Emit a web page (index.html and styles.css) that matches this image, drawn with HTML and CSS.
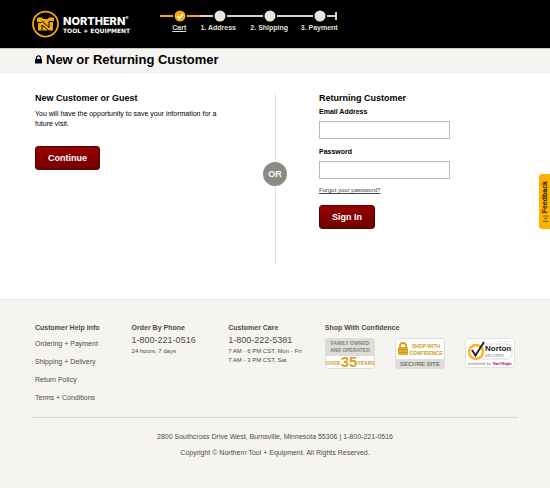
FILE: index.html
```html
<!DOCTYPE html>
<html lang="en">
<head>
<meta charset="utf-8">
<meta name="viewport" content="width=device-width, initial-scale=1">
<title>New or Returning Customer</title>
<link rel="stylesheet" href="styles.css">
</head>
<body>
<header class="top">
  <a class="brand" href="#">
    <svg class="brand-mark" viewBox="0 0 54 54" aria-hidden="true">
      <circle cx="27" cy="27" r="25" fill="none" stroke="#f3a90c" stroke-width="3.5"/>
      <path d="M12 14h8l3 3h8l3-3h10v9h-2v17H12V24h-2v-8z" fill="#f3a90c"/>
      <path d="M11 24h8M20 21l14 13V22h9M20 41V29l14 12" fill="none" stroke="#000" stroke-width="2"/>
    </svg>
    <span class="brand-words">
      <span class="brand-name">NORTHERN<sup>®</sup></span>
      <span class="brand-sub">TOOL + EQUIPMENT</span>
    </span>
  </a>
  <nav class="progress" aria-label="Checkout steps">
    <svg class="track" viewBox="0 0 178 12" aria-hidden="true">
      <path d="M0 6h13M27 6h13" stroke="#f3a90c" stroke-width="2"/>
      <path d="M40 6h13M67 6h36M117 6h36M167 6h9" stroke="#d8d3cb" stroke-width="2"/>
      <path d="M176 2v8" stroke="#d8d3cb" stroke-width="2"/>
      <circle cx="20" cy="6" r="5.5" fill="#f3a90c"/>
      <path d="M17 6l2.4 2.4L23 4" fill="none" stroke="#fff" stroke-width="1.5"/>
      <circle cx="60" cy="6" r="5.5" fill="#ebe6dd"/>
      <circle cx="110" cy="6" r="5.5" fill="#ebe6dd"/>
      <circle cx="160" cy="6" r="5.5" fill="#ebe6dd"/>
    </svg>
    <ol class="steps">
      <li><a href="#">Cart</a></li>
      <li>1. Address</li>
      <li>2. Shipping</li>
      <li>3. Payment</li>
    </ol>
  </nav>
</header>

<div class="title-bar">
  <svg class="lock" viewBox="0 0 14 18" aria-hidden="true">
    <rect x="0" y="8" width="14" height="9" rx="1" fill="#000"/>
    <path d="M3 9V5.5a4 4 0 0 1 8 0V9" fill="none" stroke="#000" stroke-width="2.5"/>
  </svg>
  <h1>New or Returning Customer</h1>
</div>

<main class="choices">
  <section class="guest">
    <h2>New Customer or Guest</h2>
    <p>You will have the opportunity to save your information for a future visit.</p>
    <button class="action" type="button">Continue</button>
  </section>
  <div class="divider"><span>OR</span></div>
  <form class="login">
    <h2>Returning Customer</h2>
    <label for="email">Email Address</label>
    <input id="email" type="email">
    <label for="password">Password</label>
    <input id="password" type="password">
    <a class="forgot" href="#">Forgot your password?</a>
    <button class="action" type="button">Sign In</button>
  </form>
</main>

<footer class="foot">
  <div class="foot-columns">
    <section>
      <h3>Customer Help Info</h3>
      <ul class="links">
        <li><a href="#">Ordering + Payment</a></li>
        <li><a href="#">Shipping + Delivery</a></li>
        <li><a href="#">Return Policy</a></li>
        <li><a href="#">Terms + Conditions</a></li>
      </ul>
    </section>
    <section>
      <h3>Order By Phone</h3>
      <p class="phone">1-800-221-0516</p>
      <p class="hours">24 hours, 7 days</p>
    </section>
    <section>
      <h3>Customer Care</h3>
      <p class="phone">1-800-222-5381</p>
      <p class="hours">7 AM - 6 PM CST, Mon - Fri<br>7 AM - 3 PM CST, Sat</p>
    </section>
    <section class="trust">
      <h3>Shop With Confidence</h3>
      <div class="badges">
        <svg class="badge" viewBox="0 0 50 31" role="img" aria-label="Family owned and operated over 35 years">
          <rect x=".5" y=".5" width="49" height="30" rx="2" fill="#fff" stroke="#deddd9"/>
          <path d="M1 1h48v17H1z" fill="#dddcd8"/>
          <g class="badge-text" text-anchor="middle">
            <text x="25" y="7" fill="#85837e">FAMILY OWNED</text>
            <text x="25" y="14" fill="#85837e">AND OPERATED</text>
            <text x="8" y="27" fill="#d59a1c">OVER</text>
            <text x="41" y="27" fill="#d59a1c">YEARS</text>
            <text class="badge-number" x="24" y="29" fill="#d8a01d">35</text>
          </g>
        </svg>
        <svg class="badge" viewBox="0 0 50 31" role="img" aria-label="Shop with confidence, secure site">
          <rect x=".5" y=".5" width="49" height="30" rx="2" fill="#fff" stroke="#deddd9"/>
          <path d="M1 21h48v9H1z" fill="#dddcd8"/>
          <path d="M5 10V8a3 3 0 0 1 6 0v2" fill="none" stroke="#d8a01d" stroke-width="1.8"/>
          <rect x="3" y="9" width="10" height="8" rx="1" fill="#e1aa2c"/>
          <path d="M3 11.5h10M3 14.5h10" stroke="#c78d16" stroke-width=".6"/>
          <g class="badge-text" text-anchor="middle">
            <text x="31" y="10" fill="#d59a1c">SHOP WITH</text>
            <text x="31" y="17" fill="#d59a1c">CONFIDENCE</text>
            <text class="badge-foot" x="25" y="28" fill="#77756f">SECURE SITE</text>
          </g>
        </svg>
        <svg class="badge" viewBox="0 0 50 31" role="img" aria-label="Norton Secured, powered by VeriSign">
          <rect x=".5" y=".5" width="49" height="29" rx="3" fill="#fff" stroke="#e2e1de"/>
          <path d="M17 6h25a5 5 0 0 1 5 5v5a5 5 0 0 1-5 5H17" fill="none" stroke="#c9c9c7" stroke-width=".7"/>
          <path d="M33 3.5h11" stroke="#cfcfcd" stroke-width=".7" stroke-dasharray="1 .5"/>
          <circle cx="11" cy="14" r="7" fill="#fff" stroke="#f8b820" stroke-width="2.5"/>
          <path d="M7 12l3.5 5.5L19 4" fill="none" stroke="#222" stroke-width="2"/>
          <text class="norton" x="20" y="13" fill="#222">Norton</text>
          <text class="norton-small" x="20" y="19" fill="#8b8b8b">SECURED</text>
          <text class="norton-small" x="3" y="27" fill="#777">powered by <tspan fill="#b51f55" font-weight="bold">VeriSign</tspan></text>
        </svg>
      </div>
    </section>
  </div>
  <div class="legal">
    <p>2800 Southcross Drive West, Burnsville, Minnesota 55306 | 1-800-221-0516</p>
    <p>Copyright © Northern Tool + Equipment. All Rights Reserved.</p>
  </div>
</footer>

<button class="feedback" type="button"><span>[+]</span> <b>Feedback</b></button>
</body>
</html>
```
FILE: styles.css
```css
* { box-sizing: border-box; }

body {
  margin: 0;
  min-height: 100vh;
  display: flex;
  flex-direction: column;
  background: #fff;
  color: #000;
  font: 7px/10px "Liberation Sans", Arial, sans-serif;
}

h1, h2, h3, p, ul, ol { margin: 0; padding: 0; }
ul, ol { list-style: none; }
a { color: inherit; }
button, input { font-family: inherit; }

.top {
  display: flex;
  align-items: flex-start;
  gap: 30px;
  height: 48px;
  padding: 10px 32px 0;
  background: #000;
  color: #e4e0d9;
}

.brand {
  display: flex;
  gap: 4px;
  color: #fff;
  text-decoration: none;
}
.brand-mark { width: 27px; height: 28px; }
.brand-words { display: flex; flex-direction: column; gap: 1px; padding-top: 6px; }
.brand-name { display: flex; font: 800 11px/11px Inter, sans-serif; }
.brand-name sup { font-size: 5px; line-height: 5px; }
.brand-sub { font: 700 6px/6px "DejaVu Sans", sans-serif; }

.progress { width: 178px; }
.track { display: block; width: 100%; height: 12px; }
.steps {
  display: grid;
  grid-template-columns: 38px 40px 62px 38px;
  padding-top: 1px;
  font-weight: bold;
  text-align: center;
  white-space: nowrap;
}

.title-bar {
  display: flex;
  align-items: center;
  gap: 4px;
  height: 25px;
  padding: 0 35px 2px;
  border-top: 1px solid #cbc9c5;
  border-bottom: 1px solid #efeeeb;
  background: #f6f4f0;
}
.lock { width: 7px; height: 9px; }
h1 { font-size: 13px; line-height: 16px; }

.choices {
  display: grid;
  grid-template-columns: 1fr 24px 1fr;
  column-gap: 32px;
  flex: 1 0 auto;
  padding: 20px 35px 34px;
}
h2 { font-size: 9px; line-height: 11px; }
.guest p { max-width: 190px; padding-top: 5px; }

.action {
  display: block;
  height: 24px;
  padding: 0 12px;
  border: 1px solid #4c0808;
  border-radius: 3px;
  background: linear-gradient(#990000, #730000);
  color: #fff;
  font-size: 9px;
  font-weight: bold;
}
.guest .action { margin-top: 17px; }

.divider {
  padding-top: 69px;
  background: linear-gradient(#dededc, #dededc) center / 1px 100% no-repeat;
}
.divider span {
  display: block;
  width: 24px;
  height: 24px;
  border-radius: 50%;
  background: #8b8a83;
  color: #fff;
  font-size: 9px;
  font-weight: bold;
  line-height: 24px;
  text-align: center;
}

.login label {
  display: block;
  padding: 3px 0 4px;
  font-weight: bold;
}
.login input {
  display: block;
  width: 131px;
  height: 18px;
  margin-bottom: 5px;
  padding: 0 4px;
  border: 1px solid #bbb9b4;
  background: #fff;
  font-size: 8px;
}
.forgot {
  display: block;
  padding-top: 1px;
  color: #444;
  font-size: 6px;
}
.login .action { margin-top: 10px; }

.foot {
  padding: 22px 32px 30px;
  border-top: 1px solid #e9e7e3;
  background: #f6f4f0;
  color: #4d4b47;
}
.foot-columns {
  display: grid;
  grid-template-columns: 1fr 1fr 1fr 2fr;
  padding: 0 0 14px 3px;
}
h3 { font-size: 7px; line-height: 12px; }
.links { display: grid; gap: 8px; padding-top: 5px; }
.links a { text-decoration: none; }
.phone { font-size: 9px; line-height: 13px; }
.hours { font-size: 6px; line-height: 9px; white-space: nowrap; }
.badges { display: flex; gap: 20px; padding-top: 4px; }
.badge { width: 50px; height: 31px; }
.badge-text { font: bold 5px "Liberation Sans Narrow", "Liberation Sans", sans-serif; }
.badge-number { font-size: 15px; }
.badge-foot { font-size: 6px; }
.norton { font: bold 8px "Liberation Sans", sans-serif; }
.norton-small { font: 4px "DejaVu Sans", sans-serif; }

.legal {
  display: grid;
  gap: 6px;
  padding-top: 14px;
  border-top: 1px solid #dad8d4;
  text-align: center;
}

.feedback {
  position: fixed;
  top: 174px;
  right: 0;
  width: 11px;
  height: 55px;
  padding: 0;
  border: 0;
  border-radius: 3px 0 0 3px;
  background: #fbb200;
  color: #221a00;
  font-size: 7px;
  line-height: 11px;
  writing-mode: sideways-lr;
}
.feedback span { font-size: 6px; }
```
